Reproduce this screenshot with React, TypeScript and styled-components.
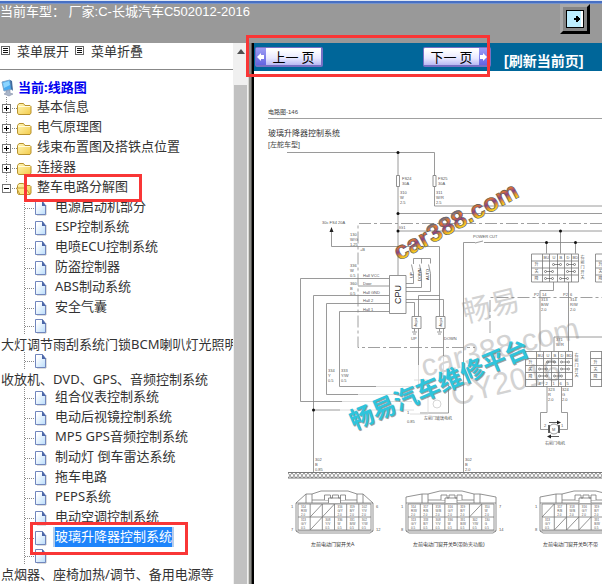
import React from "react";
import styled, { createGlobalStyle, css } from "styled-components";

const cjk = '"Noto Sans CJK SC", sans-serif';

const GlobalStyle = createGlobalStyle`
  * { box-sizing: border-box; }
  body { margin: 0; background: #fff; font: 13px/20px "Noto Sans", ${cjk}; color: #333; }
  a { color: inherit; text-decoration: none; }
  button { font: inherit; cursor: pointer; }
`;

const Frame = styled.div`
  display: flex;
  flex-direction: column;
  height: 100vh;
  overflow: hidden;
`;

const Header = styled.header`
  display: flex;
  flex: none;
  justify-content: space-between;
  align-items: flex-start;
  height: 43px;
  padding: 4px 12px 0 0;
  background: linear-gradient(#dfe7f5 1px, #4770c4 1px 3px, #7793c8 3px 4px, #999 4px);
`;

const Vehicle = styled.h1`
  margin: 0;
  font: 13px/15px "Liberation Sans", ${cjk};
  color: #fff;
  white-space: pre;
`;

const ExitButton = styled.button`
  display: flex;
  align-items: center;
  justify-content: center;
  width: 30px;
  height: 30px;
  padding: 0;
  background: #858585;
  border: 3px solid;
  border-color: #a8a8a8 #000 #000 #a8a8a8;
`;

const Body = styled.div`
  display: flex;
  flex: 1;
  min-height: 0;
`;

const Sidebar = styled.aside`
  display: flex;
  flex: none;
  width: 248px;
`;

const SidebarContent = styled.div`
  flex: 1;
  min-width: 0;
  overflow: hidden;
`;

const MenuActions = styled.div`
  display: flex;
  gap: 5px;
  height: 27px;
  border-bottom: 1px solid #888;
`;

const MenuAction = styled.button`
  display: flex;
  align-items: center;
  gap: 7px;
  height: 15px;
  padding: 0;
  border: 0;
  background: none;
  color: #333;
  white-space: nowrap;
`;

const Scrollbar = styled.div`
  display: flex;
  flex-direction: column;
  align-items: center;
  width: 15px;
  padding-top: 6px;
  background: #f0f0f0;
`;

const ScrollArrow = styled.span`
  border: 4px solid transparent;
  border-top-width: 0;
  border-bottom: 5px solid #505050;
`;

const ScrollThumb = styled.span`
  flex: 1;
  width: 13px;
  margin-top: 31px;
  background: #c1c1c1;
`;

const Splitter = styled.div`
  flex: none;
  width: 6px;
  background: linear-gradient(to right, #d5d5d0 1px, #8c8c88 1px 3px, #555550 3px 4px, #000 4px);
`;

const Tree = styled.nav`
  padding-top: 8px;
`;

const Root = styled.a`
  display: flex;
  align-items: center;
  gap: 2px;
  height: 19px;
  line-height: 19px;
  font-weight: 700;
  color: #0000f0;
`;

const Branch = styled.ul`
  margin: 0;
  padding: 0;
  list-style: none;
`;

const Row = styled.li<{ $wrapped?: boolean }>`
  display: flex;
  flex-direction: ${(p) => (p.$wrapped ? "column" : "row")};
  align-items: flex-start;
  position: relative;
  height: ${(p) => (p.$wrapped ? 35 : 20)}px;
  white-space: nowrap;
`;

const Toggle = styled.button`
  display: flex;
  width: 37px;
  height: 20px;
  padding: 0;
  border: 0;
  background: none;
`;

const Guide = styled.span`
  display: flex;
  flex: none;
  width: 55px;
`;

const NodeLink = styled.a<{ $wrapped?: boolean; $selected?: boolean }>`
  line-height: 19px;
  ${(p) => p.$wrapped && css`padding-left: 1px; line-height: 18px;`}
  ${(p) => p.$selected && css`
    height: 20px;
    color: #fff;
    background: #1e84fb;
    box-shadow: 2px 0 #b4cdec, -2px 0 #b4cdec;
  `}
`;

const Marker = styled.span<{ $x: number; $y: number; $w: number; $h: number }>`
  position: absolute;
  z-index: 2;
  left: ${(p) => p.$x}px;
  top: ${(p) => p.$y}px;
  width: ${(p) => p.$w}px;
  height: ${(p) => p.$h}px;
  border: 3px solid #f93636;
  pointer-events: none;
`;

const Viewer = styled.main`
  display: flex;
  position: relative;
  flex: 1;
  flex-direction: column;
  min-width: 0;
`;

const Toolbar = styled.div`
  display: flex;
  flex: none;
  align-items: flex-start;
  height: 28px;
  padding: 4px 0 0 1px;
  background: #069;
`;

const PageButton = styled.button<{ $next?: boolean }>`
  display: flex;
  flex-direction: ${(p) => (p.$next ? "row-reverse" : "row")};
  flex: none;
  align-items: stretch;
  width: 68px;
  height: 20px;
  padding: 0;
  margin-left: ${(p) => (p.$next ? 100 : 0)}px;
  border: 1px solid #7770c4;
  border-right-width: 2px;
  border-bottom-width: 2px;
  border-radius: 2px;
  background: linear-gradient(#fff 10%, #e8e8ff 60%, #b9b9f3);
  color: #000;
`;

const ArrowTab = styled.span`
  display: flex;
  align-items: center;
  width: 10px;
  background: linear-gradient(#9d9df4, #6464e0);
`;

const PageLabel = styled.span`
  flex: 1;
  font: 13px/17px ${cjk};
  white-space: nowrap;
`;

const Refresh = styled.a`
  margin-left: 13px;
  padding-top: 4px;
  font: 700 14px/20px "Liberation Sans", ${cjk};
  color: #fff;
  white-space: nowrap;
`;

const Sheet = styled.svg`
  display: block;
  flex: 1;
  width: 100%;
  min-height: 0;
  background: #fff;
  font-family: "Liberation Sans", ${cjk};
`;

const MenuIcon = () => (
  <svg width="10" height="9" viewBox="0 0 10 9" shapeRendering="crispEdges">
    <path d="M1.500.5h8v8h-8z" fill="none" stroke="#666" />
    <path d="M3 2.500h5M3 4.500h5M3 6.500h5" fill="none" stroke="#111" />
  </svg>
);

const ComputerIcon = () => (
  <svg width="16" height="18" viewBox="0 0 16 18">
    <path d="M2 3l8-2 2 9-8 2z" fill="#48aaf0" stroke="#7aa4ca" />
    <path d="M3 4l6-2 1 4-6 3z" fill="#8bd5ff" />
    <path d="M10 1l2 1 1 10-2-2z" fill="#426c9e" />
    <path d="M6 12l4-1v3l3 1-4 2-5-2 2-1z" fill="#a9b5c8" stroke="#8590aa" strokeWidth=".6" />
  </svg>
);

const FolderGuide = ({ open }: { open?: boolean }) => (
  <svg width="37" height="20" viewBox="0 0 37 20">
    <defs>
      <linearGradient id="folder" x1="0" y1="0" x2="1" y2="1">
        <stop offset="0" stopColor="#fff7b8" />
        <stop offset="1" stopColor="#f3cb4a" />
      </linearGradient>
    </defs>
    <path d={open ? "M6.5 0v6" : "M6.5 0v20"} stroke="#888" strokeDasharray="1 1" />
    <path d="M12 11.500h5" stroke="#888" strokeDasharray="1 1" />
    <path d="M2.500 7.500h8v8h-8z" fill="#fff" stroke="#777" shapeRendering="crispEdges" />
    <path d={open ? "M4 11.500h5" : "M4 11.500h5M6.500 9v5"} stroke="#000" shapeRendering="crispEdges" />
    <path d="M17.500 16V8.500l1.500-2h4.500l1.500 2h5l1 1V16l-1 1.500H18.500z" fill="url(#folder)" stroke="#b8922e" />
    {open ? (
      <path d="M16.500 11h9l4.500 6.500H20z" fill="#ffe989" stroke="#b48a26" strokeWidth=".8" />
    ) : (
      <path d="M18 9.500h12" stroke="#fffbdc" />
    )}
  </svg>
);

const FileGuide = ({ short }: { short?: boolean }) => (
  <svg width="55" height={short ? 18 : 20} viewBox={short ? "0 2 55 18" : "0 0 55 20"}>
    <defs>
      <linearGradient id="paper" x1="0" y1="0" x2="1" y2="1">
        <stop offset=".2" stopColor="#fff" />
        <stop offset="1" stopColor="#b9dcfa" />
      </linearGradient>
    </defs>
    <path d="M24.500 0v20M25 11.500h10" stroke="#888" strokeDasharray="1 1" />
    <path d="M37 18h9V8" fill="none" stroke="#bbb" />
    <path d="M35.500 4.500h7l3 4v9h-10z" fill="url(#paper)" stroke="#7186bd" />
    <path d="M42 4v5h4z" fill="#4b66a8" />
  </svg>
);

const folders = ["基本信息", "电气原理图", "线束布置图及搭铁点位置", "连接器"];

const files: { label: string; wrapped?: boolean; selected?: boolean }[] = [
  { label: "电源启动机部分" },
  { label: "ESP控制系统" },
  { label: "电喷ECU控制系统" },
  { label: "防盗控制器" },
  { label: "ABS制动系统" },
  { label: "安全气囊" },
  { label: "大灯调节雨刮系统门锁BCM喇叭灯光照明", wrapped: true },
  { label: "收放机、DVD、GPS、音频控制系统", wrapped: true },
  { label: "组合仪表控制系统" },
  { label: "电动后视镜控制系统" },
  { label: "MP5 GPS音频控制系统" },
  { label: "制动灯 倒车雷达系统" },
  { label: "拖车电路" },
  { label: "PEPS系统" },
  { label: "电动空调控制系统" },
  { label: "玻璃升降器控制系统", selected: true },
  { label: "点烟器、座椅加热/调节、备用电源等", wrapped: true },
];

type Point = [number, number];

const Note = ({ x, y, lines, gap = 5, size = 4 }: { x: number; y: number; lines: string[]; gap?: number; size?: number }) => (
  <text fontSize={size} fill="#555">
    {lines.map((line, i) => (
      <tspan key={i} x={x} y={y + i * gap}>{line}</tspan>
    ))}
  </text>
);

const Dots = ({ at }: { at: Point[] }) => (
  <g fill="#111">
    {at.map(([x, y]) => <circle key={`${x},${y}`} cx={x} cy={y} r="1.500" />)}
  </g>
);

const SwitchTable = ({ x, y, rows, marks, partial }: { x: number; y: number; rows: number; marks: Point[]; partial?: boolean }) => {
  const h = rows * 7;
  return (
    <g>
      <path
        d={`M${x} ${y}h47v${h}h-47z` +
          [11, 18, 26, 33, 40].map((c) => `M${x + c} ${y}v${h}`).join("") +
          Array.from({ length: rows - 1 }, (_, r) => `M${x} ${y + 7 * (r + 1)}h47`).join("")}
        fill="none" stroke="#777" strokeWidth=".8"
      />
      <g fill="none" stroke="#444" strokeWidth=".6">
        {marks.map(([c, r]) => (
          <path key={`${c},${r}`} d={`M${x + c} ${y + r}m-1 0a1 1 0 1 0 2 0a1 1 0 1 0-2 0m2 0h5m0 0a1 1 0 1 0 2 0a1 1 0 1 0-2 0`} />
        ))}
      </g>
      <Note x={x + 3} y={y + 12} gap={7} lines={["升", "关", "降"]} />
      {!partial && (
        <>
          <Note x={x + 12} y={y + 5} lines={["BU"]} />
          <Note x={x + 21} y={y + 5} lines={["U"]} />
          <Note x={x + 28} y={y + 5} lines={["B"]} />
          <Note x={x + 35} y={y + 5} lines={["D"]} />
          <Note x={x + 41} y={y + 5} lines={["BD"]} />
          <Note x={x + 49} y={y + 5} lines={["右", "前", "门", "开", "关"]} />
        </>
      )}
      {rows > 4 && !partial && ["4", "2", "1", "6", "5"].map((pin, i) => (
        <Note key={pin} x={x + 13 + i * 7} y={y + 33} lines={[pin]} />
      ))}
    </g>
  );
};

const Connector = ({ x, width, cols, shown = cols, blank, cut, pins, label, labelX }: {
  x: number; width: number; cols: number; shown?: number; blank: Point[]; cut: number; pins: string[]; label: string; labelX: number;
}) => {
  const cell = (width - 4) / cols;
  const mid = x + width / 2;
  const codes = ["314", "317", "318", "316", "319", "102", "310", "313", "333", "308", "336", "331", "302", "130"];
  const colors = ["R/W", "R/B", "W/B", "G/Y", "B/Y", "Y/V", "W", "B/W", "Y/W", "G"];
  const cells: Point[] = [];
  for (let r = 0; r < 2; r++) for (let c = 0; c < shown; c++) cells.push([c, r]);
  return (
    <g>
      <g fill="none" stroke="#777" strokeWidth=".8">
        <path d={`M${x} 503v28l3 2h${width - 6}l3-2v-28z`} />
        <path d={`M${x + 2} 504h${width - 4}v26h-${width - 4}zM${x + 2} 517h${width - 4}M${x} 531h${width}`} />
        <path
          d={cut > 10
            ? `M${x} 503v-6l${cut} -3h6l12-3h${width - 2 * cut - 36}l12 3h6l${cut} 3v6`
            : `M${x} 503l${cut} -9h6l9-3h${width - 2 * cut - 30}l9 3h6l${cut} 9`}
        />
        <path d={`M${x + cut} 494v9M${x + cut + 6} 494v9M${x + width - cut} 494v9M${x + width - cut - 6} 494v9M${x + cut + 6} 500H${x + width - cut - 6}`} />
        <path d={`M${mid - 10} 500v-5h6v3h2v-3h6v3h2v-3h5v5M${mid - 6} 503v-5h12v5`} fill="#fff" />
        {Array.from({ length: cols - 1 }, (_, i) => {
          const cx = x + 2 + cell * (i + 1);
          return <path key={i} d={`M${cx} 504v26`} />;
        })}
        {blank.map(([c, r]) => {
          const left = x + 2 + cell * c;
          return <path key={`${c},${r}`} d={`M${left} ${517 + r * 13}l${cell} -13`} />;
        })}
      </g>
      {cells
        .filter(([c, r]) => !blank.some(([bc, br]) => bc === c && br === r))
        .map(([c, r]) => (
          <Note key={`${c},${r}`} x={x + 5 + cell * c} y={508 + r * 13} gap={4} size={3}
            lines={[codes[c + r * 7], colors[(c + r * 3) % 10], r ? "0.5" : "2.0"]} />
        ))}
      <Note x={x - 5} y={508} lines={[pins[0]]} />
      <Note x={x - 5} y={531} lines={[pins[2]]} />
      {shown === cols && <Note x={x + width + 3} y={508} lines={[pins[1]]} />}
      {shown === cols && <Note x={x + width + 3} y={531} lines={[pins[3]]} />}
      <text x={labelX} y="546" fontSize="5" fill="#333">{label}</text>
    </g>
  );
};

const WiringSheet = () => (
  <Sheet viewBox="254 71 348 513" preserveAspectRatio="xMinYMin slice" role="img" aria-label="玻璃升降器控制系统电路图">
    <defs>
      <linearGradient id="rainbow" gradientUnits="userSpaceOnUse" x1="0" y1="-19" x2="0" y2="1">
        <stop offset="0" stopColor="#2f66b0" />
        <stop offset=".3" stopColor="#e87a2a" />
        <stop offset=".55" stopColor="#8a3f86" />
        <stop offset=".75" stopColor="#e89a28" />
        <stop offset="1" stopColor="#fff01a" />
      </linearGradient>
      <pattern id="mesh" x="288" y="473" width="8" height="5" patternUnits="userSpaceOnUse">
        <path d="M0 0l4 5 4-5M0 5l4-5 4 5" fill="none" stroke="#666" strokeWidth=".7" />
      </pattern>
    </defs>

    <g fill="#d3d3d3">
      <text transform="translate(465 323) rotate(-14)" fontSize="29">畅易</text>
      <text transform="translate(424 377) rotate(-14)" fontSize="31">car388.com</text>
      <text transform="translate(454 406) rotate(-14)" fontSize="31">CY2016</text>
    </g>

    <text x="268" y="114" fontSize="6" fill="#444">电路图-146</text>
    <path d="M268 118.500H602" stroke="#888" strokeWidth=".8" />
    <text x="268" y="136" fontSize="8" fill="#333">玻璃升降器控制系统</text>
    <text x="268" y="147" fontSize="7" fill="#444">[左舵车型]</text>

    <g fill="none" stroke="#808080" strokeWidth=".8">
      <path d="M287 152.500H434.500V206H602M398 152.500V275.500M398 213.500H602M398 231H602" />
      <path d="M331.500 231V246.500H439.500V316" />
      <path d="M389 278.500H300.500V401.500H342M389 295.500H313.500V472M389 303.500H326.500V394.500H358M389 311.500H339.500V386.500H376M358 286H389M313.500 410H340" />
      <path d="M406 283.500h7.500v-10l-2-9M413.500 264v-5.500h17v5M421.500 258.500v5M406 287.500h15.500v-14l-2-9M406 291.500h24.500v-18l-2-9" />
      <path d="M439.500 295.500h-21v21M406 299.500h37.500v17M406 302.500h8.500v14M418.500 328v37M443.500 328v28M448.500 385v28H420" />
      <path d="M602 242.500H484M475 242.500H463.500V472M475 243l8-2" />
      <path d="M546.500 242.500v11M560.500 231v22.500M575.500 242.500v11M553.500 282v8.500H540V351M568.500 282v69M554 351v-14h48" />
      <path d="M547 386.500v26h-6.500v17H548M561.500 386.500v26h6v17H560" />
      <circle cx="554" cy="429" r="5" />
      <circle cx="437" cy="404" r="4" stroke="#ccc" />
      <path d="M549 422.500h10M549 436.500h10" stroke="#333" />
      <path d="M549 425v8M559 425v8" stroke="#333" strokeWidth="1.500" />
      <path d="M414.500 328.500v3M412 332h5M413 334h3M439.500 328.500v3M437 332h5M438 334h3" />
    </g>
    <g fill="none" stroke="#d5d5d5" strokeWidth=".8">
      <path d="M376 386.500h40M358 394.500h50M342 401.500h70M340 410h74M418.500 365v23M443.500 356v30M414 380h14v34h-18" />
    </g>
    <g fill="none" stroke="#888" strokeWidth=".8" strokeDasharray="12 3 3 3">
      <path d="M602 223.500H358V347.500H475M490 333V297.500H602" />
    </g>
    <g fill="#fff" stroke="#777" strokeWidth=".8">
      <path d="M396.500 175.500h3v11h-3zM433 175.500h3v11h-3zM389.500 275.500H406v38h-16.500zM412 316.500h9v12h-9zM436 316.500h9v12h-9z" />
    </g>
    <path d="M331.500 227l-2 5h4zM561 422.500l-4-2v4zM547 436.500l4-2v4z" fill="#222" />
    <text transform="translate(401 304) rotate(-90)" fontSize="9" fill="#222">CPU</text>
    <text transform="translate(413 278) rotate(-90)" fontSize="4" fill="#333">UP</text>
    <text transform="translate(421 281) rotate(-90)" fontSize="4" fill="#333">DOWN</text>
    <text transform="translate(429 280) rotate(-90)" fontSize="4" fill="#333">AUTO</text>
    <text transform="translate(415 318) rotate(90)" fontSize="4" fill="#333">relay</text>
    <text transform="translate(440 318) rotate(90)" fontSize="4" fill="#333">relay</text>
    <Dots at={[[398, 152.5], [398, 213.5], [398, 231], [560.5, 231], [546.5, 242.5], [575.5, 242.5], [313.5, 410]]} />

    <Note x={402} y={180} lines={["FS24", "30A"]} />
    <Note x={438} y={180} lines={["FS25", "30A"]} />
    <Note x={400} y={194} lines={["310", "W", "2.5"]} />
    <Note x={436} y={194} lines={["311", "W/R", "2.5"]} />
    <Note x={322} y={224} lines={["30c FS4 20A"]} />
    <Note x={399} y={229} lines={["IG1"]} />
    <Note x={350} y={236} lines={["130", "W/G", "1.25"]} />
    <Note x={360} y={251} lines={["+B"]} />
    <Note x={350} y={267} lines={["336", "W", "0.5"]} />
    <Note x={350} y={285} lines={["360", "B", "0.5"]} />
    <Note x={363} y={277} lines={["Hall VCC"]} />
    <Note x={363} y={285} lines={["Door"]} />
    <Note x={363} y={294} lines={["Hall GND"]} />
    <Note x={363} y={302} lines={["Hall 2"]} />
    <Note x={363} y={311} lines={["Hall 1"]} />
    <Note x={328} y={372} lines={["334", "Y", "0.5"]} />
    <Note x={341} y={372} lines={["333", "Y/W", "0.5"]} />
    <Note x={315} y={461} lines={["302", "B", "0.85"]} />
    <Note x={465} y={461} lines={["302", "B", "2.0"]} />
    <Note x={411} y={340} lines={["UP"]} />
    <Note x={444} y={340} lines={["DOWN"]} />
    <Note x={473} y={238} lines={["POWER CUT"]} />
    <Note x={407} y={414} gap={9} lines={["1", "0.85"]} />
    <Note x={424} y={420} lines={["左前门玻璃电机"]} />
    <Note x={534} y={296} lines={["P2"]} />
    <Note x={542} y={296} lines={["14"]} />
    <Note x={563} y={296} lines={["P2"]} />
    <Note x={570} y={296} lines={["6"]} />
    <Note x={541} y={301} lines={["313", "B/W", "2.0"]} />
    <Note x={570} y={301} lines={["314", "R/W", "2.0"]} />
    <Note x={556} y={341} lines={["371", "W/R"]} />
    <Note x={548} y={391} lines={["323", "R", "2.0"]} />
    <Note x={562} y={391} lines={["324", "G", "2.0"]} />
    <Note x={544} y={427} lines={["2"]} />
    <Note x={561} y={427} lines={["1"]} />
    <Note x={552} y={431} lines={["M"]} />
    <Note x={545} y={445} lines={["右前门电机"]} />

    <SwitchTable x={531.5} y={254} rows={4} marks={[[22, 10.5], [36, 10.5], [14, 17.5], [36, 17.5], [14, 24.5], [29, 24.5]]} />
    <SwitchTable x={595.5} y={254} rows={4} marks={[]} partial />
    <SwitchTable x={525.5} y={351.5} rows={5} marks={[[22, 10.5], [36, 10.5], [14, 17.5], [36, 17.5], [14, 24.5], [29, 24.5]]} />
    <SwitchTable x={590.5} y={351.5} rows={5} marks={[]} partial />

    <path d="M288 472.500H602M288 478H602" stroke="#555" strokeWidth=".8" />
    <path d="M288 473H602v5H288z" fill="url(#mesh)" />

    <Connector x={296} width={77} cols={6} cut={10} blank={[[1, 0], [2, 0], [1, 1]]} pins={["1", "6", "7", "12"]} label="左前电动门窗开关A" labelX={311} />
    <Connector x={406} width={90} cols={7} cut={16} blank={[[5, 0]]} pins={["1", "7", "8", "14"]} label="左前电动门窗开关B(带防夹功能)" labelX={413} />
    <Connector x={540} width={90} cols={7} shown={5} cut={16} blank={[[0, 0], [1, 1], [2, 1], [3, 1]]} pins={["1", "7", "8", "14"]} label="左前电动门窗开关B(不带" labelX={543} />

    <g fontWeight="700">
      <text transform="translate(355 431) rotate(-23)" fontSize="24" fill="#777" opacity=".7">畅易汽车维修平台</text>
      <text transform="translate(354 430) rotate(-23)" fontSize="24" fill="#2fc4dc">畅易汽车维修平台</text>
      <text transform="translate(399 261) rotate(-28)" fontSize="25" fill="url(#rainbow)" stroke="#555" strokeWidth=".6">car388.com</text>
    </g>
  </Sheet>
);

const PageArrow = ({ next }: { next?: boolean }) => (
  <svg width="9" height="10" viewBox="0 0 9 10" aria-hidden="true">
    <path d={next ? "M8 5L4 1v2H1v4h3v2z" : "M1 5l4-4v2h3v4H5v2z"} fill="#fff" />
  </svg>
);

export default function App() {
  return (
    <Frame>
      <GlobalStyle />
      <Header>
        <Vehicle>{"当前车型： 厂家:C-长城汽车C502012-2016"}</Vehicle>
        <ExitButton aria-label="退出">
          <svg width="18" height="18" viewBox="0 0 18 18" shapeRendering="crispEdges">
            <path d="M0 0h18v18H0z" fill="#000" />
            <path d="M1 1h14v16H1z" fill="#bdeeff" />
            <path d="M15 1h2v16h-2z" fill="#fff" />
            <path d="M8 8h2V6h2v1h1v1h1v2h-1v1h-1v1h-2v-2H8z" fill="#000" />
          </svg>
        </ExitButton>
      </Header>
      <Body>
        <Sidebar>
          <SidebarContent>
            <MenuActions>
              <MenuAction><MenuIcon />菜单展开</MenuAction>
              <MenuAction><MenuIcon />菜单折叠</MenuAction>
            </MenuActions>
            <Tree>
              <Root href="#root"><ComputerIcon />当前:线路图</Root>
              <Branch>
                {folders.map((name) => (
                  <Row key={name}>
                    <Toggle aria-label={`展开${name}`}><FolderGuide /></Toggle>
                    <NodeLink href="#folder">{name}</NodeLink>
                  </Row>
                ))}
                <Row>
                  <Toggle aria-label="折叠整车电路分解图"><FolderGuide open /></Toggle>
                  <NodeLink href="#folder">整车电路分解图</NodeLink>
                  <Marker $x={24} $y={-3} $w={118} $h={28} />
                </Row>
                {files.map(({ label, wrapped, selected }) => (
                  <Row key={label} $wrapped={wrapped}>
                    <Guide><FileGuide short={wrapped} /></Guide>
                    <NodeLink href="#file" $wrapped={wrapped} $selected={selected}>{label}</NodeLink>
                    {selected && <Marker $x={30} $y={-5} $w={158} $h={33} />}
                  </Row>
                ))}
              </Branch>
            </Tree>
          </SidebarContent>
          <Scrollbar aria-hidden="true">
            <ScrollArrow />
            <ScrollThumb />
          </Scrollbar>
        </Sidebar>
        <Splitter />
        <Viewer>
          <Toolbar>
            <PageButton><ArrowTab><PageArrow /></ArrowTab><PageLabel>上一 页</PageLabel></PageButton>
            <PageButton $next><ArrowTab><PageArrow next /></ArrowTab><PageLabel>下一 页</PageLabel></PageButton>
            <Refresh href="#refresh">[刷新当前页]</Refresh>
          </Toolbar>
          <WiringSheet />
          <Marker $x={-8} $y={-8} $w={244} $h={42} />
        </Viewer>
      </Body>
    </Frame>
  );
}
